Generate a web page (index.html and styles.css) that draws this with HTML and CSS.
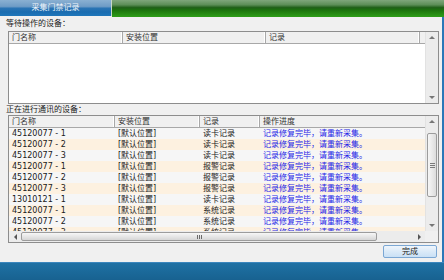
FILE: index.html
```html
<!DOCTYPE html>
<html lang="zh-CN">
<head>
  <meta charset="UTF-8">
  <title>采集门禁记录</title>
  <link rel="stylesheet" href="styles.css">
</head>
<body>
  <div class="window">
    <div class="titlebar">
      <div class="tab">采集门禁记录</div>
      <div class="title-fill"></div>
    </div>

    <div class="content">
      <div class="label">等待操作的设备：</div>
      <div class="listbox list-wait">
        <div class="list-main">
          <div class="list-head">
            <div class="col w-name1">门名称</div>
            <div class="col w-pos1">安装位置</div>
            <div class="col w-rec1">记录</div>
            <div class="col-fill"></div>
          </div>
          <div class="list-body"></div>
        </div>
        <div class="vscroll">
          <div class="sbtn"><span class="arr up"></span></div>
          <div class="track"></div>
          <div class="sbtn"><span class="arr down"></span></div>
        </div>
      </div>

      <div class="label">正在进行通讯的设备：</div>
      <div class="listbox list-run">
        <div class="list-top">
          <div class="list-main">
            <div class="list-head">
              <div class="col w-name2">门名称</div>
              <div class="col w-pos2">安装位置</div>
              <div class="col w-rec2">记录</div>
              <div class="col w-prog last">操作进度</div>
            </div>
            <div class="list-body rows">
              <div class="row"><span class="w-name2">45120077 - 1</span><span class="w-pos2">[默认位置]</span><span class="w-rec2">读卡记录</span><span class="w-prog prog">记录修复完毕，请重新采集。</span></div>
              <div class="row"><span class="w-name2">45120077 - 2</span><span class="w-pos2">[默认位置]</span><span class="w-rec2">读卡记录</span><span class="w-prog prog">记录修复完毕，请重新采集。</span></div>
              <div class="row"><span class="w-name2">45120077 - 3</span><span class="w-pos2">[默认位置]</span><span class="w-rec2">读卡记录</span><span class="w-prog prog">记录修复完毕，请重新采集。</span></div>
              <div class="row"><span class="w-name2">45120077 - 1</span><span class="w-pos2">[默认位置]</span><span class="w-rec2">报警记录</span><span class="w-prog prog">记录修复完毕，请重新采集。</span></div>
              <div class="row"><span class="w-name2">45120077 - 2</span><span class="w-pos2">[默认位置]</span><span class="w-rec2">报警记录</span><span class="w-prog prog">记录修复完毕，请重新采集。</span></div>
              <div class="row"><span class="w-name2">45120077 - 3</span><span class="w-pos2">[默认位置]</span><span class="w-rec2">报警记录</span><span class="w-prog prog">记录修复完毕，请重新采集。</span></div>
              <div class="row"><span class="w-name2">13010121 - 1</span><span class="w-pos2">[默认位置]</span><span class="w-rec2">读卡记录</span><span class="w-prog prog">记录修复完毕，请重新采集。</span></div>
              <div class="row"><span class="w-name2">45120077 - 1</span><span class="w-pos2">[默认位置]</span><span class="w-rec2">系统记录</span><span class="w-prog prog">记录修复完毕，请重新采集。</span></div>
              <div class="row"><span class="w-name2">45120077 - 2</span><span class="w-pos2">[默认位置]</span><span class="w-rec2">系统记录</span><span class="w-prog prog">记录修复完毕，请重新采集。</span></div>
              <div class="row"><span class="w-name2">45120077 - 3</span><span class="w-pos2">[默认位置]</span><span class="w-rec2">系统记录</span><span class="w-prog prog">记录修复完毕，请重新采集。</span></div>
            </div>
          </div>
          <div class="vscroll">
            <div class="sbtn"><span class="arr up"></span></div>
            <div class="track">
              <div class="vthumb"><span class="grip-h"></span></div>
            </div>
            <div class="sbtn"><span class="arr down"></span></div>
          </div>
        </div>
        <div class="list-bottom">
          <div class="hscroll">
            <div class="sbtn"><span class="arr left"></span></div>
            <div class="htrack">
              <div class="hthumb"><span class="grip-v"></span></div>
            </div>
            <div class="sbtn"><span class="arr right"></span></div>
          </div>
          <div class="corner"></div>
        </div>
      </div>

      <div class="actions">
        <button class="btn">完成</button>
      </div>
    </div>

    <div class="taskbar"></div>
  </div>
</body>
</html>
```

FILE: styles.css
```css
body {
  margin: 0;
  padding: 0;
  font-family: "DejaVu Sans", "Noto Sans CJK SC", sans-serif;
  font-size: 8px;
  color: #1a1a1a;
  background-color: #f0f0f0;
}
.window {
  width: 444px;
  height: 280px;
  display: flex;
  flex-direction: column;
  overflow: hidden;
}
.titlebar {
  display: flex;
  height: 17px;
  flex-shrink: 0;
}
.tab {
  width: 111px;
  height: 16px;
  line-height: 16px;
  text-align: center;
  color: #eef4fa;
  background: linear-gradient(to bottom, #8ab0d2 0%, #6f9cc6 40%, #2a74b4 52%, #1a6cb0 75%, #1f76ba 100%);
  border-right: 1px solid #c8d8c8;
}
.title-fill {
  flex: 1;
  background: linear-gradient(to bottom, #7fa67b 0%, #5d8e58 28%, #1f5f17 45%, #1c740d 60%, #2e9e18 100%);
}
.content {
  flex: 1;
  display: flex;
  flex-direction: column;
  padding: 0 3px 0 8px;
  border-right: 2px solid #2a78b8;
}
.label {
  margin-left: -2px;
  height: 14px;
  line-height: 14px;
  color: #1a1a1a;
}
.list-run + .label,
.list-wait + .label {
  height: 11px;
  line-height: 11px;
}
.listbox {
  border: 1px solid #8d8d8d;
  background-color: #fff;
}
.list-wait {
  height: 71px;
  display: flex;
}
.list-run {
  height: 126px;
  display: flex;
  flex-direction: column;
}
.list-top {
  display: flex;
  height: 115px;
}
.list-main {
  flex: 1;
  display: flex;
  flex-direction: column;
  overflow: hidden;
}
.list-head {
  display: flex;
  flex-shrink: 0;
  height: 11px;
  line-height: 11px;
  background-color: #f0f0f0;
  border-bottom: 1px solid #a8a8a8;
  color: #333;
}
.list-wait .list-head {
  height: 11px;
}
.col {
  padding-left: 3px;
  box-sizing: border-box;
  border-right: 1px solid #a8a8a8;
  box-shadow: inset -1px 0 0 #fff;
  white-space: nowrap;
}
.col.last {
  border-right: none;
  box-shadow: none;
}
.col-fill {
  flex: 1;
}
.w-name1 { width: 114px; }
.w-pos1 { width: 143px; }
.w-rec1 { width: 154px; }
.w-name2 { width: 106px; }
.w-pos2 { width: 85px; }
.w-rec2 { width: 60px; }
.w-prog { flex: 1; }
.list-body {
  flex: 1;
  background-color: #fff;
}
.rows {
  overflow: hidden;
}
.row {
  display: flex;
  height: 11px;
  line-height: 11px;
  background-color: #f6f6f6;
  white-space: nowrap;
}
.row:nth-child(even) {
  background-color: #fdf1e0;
}
.row span {
  padding-left: 3px;
  box-sizing: border-box;
  flex-shrink: 0;
}
.row .w-prog {
  flex: 1;
}
.prog {
  color: #1f1fe6;
}
.vscroll {
  width: 12px;
  display: flex;
  flex-direction: column;
  background-color: #ececec;
  border-left: 1px solid #e2e2e2;
}
.sbtn {
  height: 11px;
  width: 12px;
  flex-shrink: 0;
  display: flex;
  align-items: center;
  justify-content: center;
}
.track {
  flex: 1;
  position: relative;
}
.vthumb {
  margin: 6px 1px 0 1px;
  height: 62px;
  border: 1px solid #9c9c9c;
  border-radius: 2px;
  background: linear-gradient(to right, #f6f6f6, #dcdcdc);
  display: flex;
  align-items: center;
  justify-content: center;
}
.grip-h {
  width: 5px;
  height: 5px;
  background: repeating-linear-gradient(to bottom, #7a7a7a 0 1px, transparent 1px 2px);
}
.arr {
  width: 0;
  height: 0;
}
.arr.up {
  border-left: 3px solid transparent;
  border-right: 3px solid transparent;
  border-bottom: 3px solid #777;
}
.arr.down {
  border-left: 3px solid transparent;
  border-right: 3px solid transparent;
  border-top: 3px solid #777;
}
.arr.left {
  border-top: 3px solid transparent;
  border-bottom: 3px solid transparent;
  border-right: 3px solid #555;
}
.arr.right {
  border-top: 3px solid transparent;
  border-bottom: 3px solid transparent;
  border-left: 3px solid #555;
}
.list-bottom {
  display: flex;
  height: 11px;
}
.hscroll {
  flex: 1;
  display: flex;
  background-color: #ececec;
}
.htrack {
  flex: 1;
}
.hthumb {
  width: 356px;
  height: 9px;
  border: 1px solid #9c9c9c;
  border-radius: 2px;
  box-sizing: border-box;
  margin-top: 1px;
  background: linear-gradient(to bottom, #f7f7f7, #d6d6d6);
  display: flex;
  align-items: center;
  justify-content: center;
}
.grip-v {
  width: 5px;
  height: 4px;
  background: repeating-linear-gradient(to right, #6a6a6a 0 1px, transparent 1px 2px);
}
.corner {
  width: 13px;
  background-color: #f0f0f0;
}
.actions {
  display: flex;
  justify-content: flex-end;
  padding: 2px 2px 0 0;
  height: 17px;
}
.btn {
  width: 54px;
  height: 13px;
  padding: 0;
  font-family: inherit;
  font-size: 8px;
  line-height: 11px;
  color: #1a1a1a;
  border: 1px solid #7ba7d4;
  border-radius: 2px;
  background: linear-gradient(to bottom, #eef5fc 0%, #dbeaf8 50%, #c9e0f5 100%);
}
.taskbar {
  height: 18px;
  flex-shrink: 0;
  border-top: 1px solid #3b86bd;
  background: linear-gradient(to bottom, #1f71a4, #17618f);
}
```
